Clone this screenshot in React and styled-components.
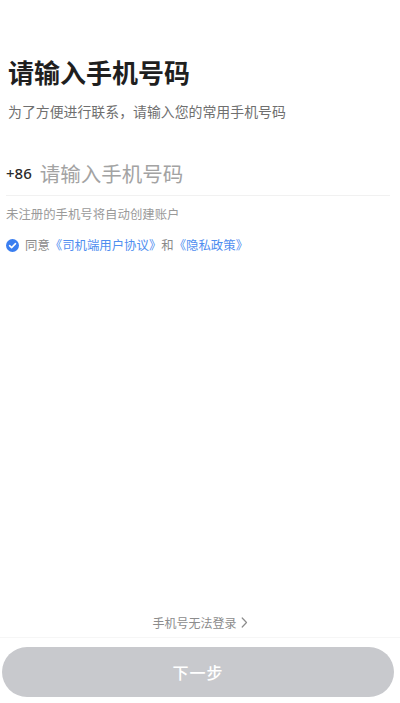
import React from 'react';
import styled, { createGlobalStyle } from 'styled-components';

const GlobalStyle = createGlobalStyle`
  html, body {
    margin: 0;
    padding: 0;
    background: #ffffff;
  }
  body {
    font-family: "Noto Sans CJK SC", "Noto Sans", sans-serif;
  }
`;

const Page = styled.div`
  display: flex;
  flex-direction: column;
  min-height: 100vh;
  box-sizing: border-box;
`;

const Top = styled.div`
  flex: 1;
  padding: 0 10px 0 6px;
`;

const Title = styled.h1`
  margin: 54px 0 0 2px;
  font-size: 26px;
  line-height: 36px;
  font-weight: 700;
  color: #1f1f1f;
`;

const Subtitle = styled.p`
  margin: 11px 0 0 2px;
  font-size: 13.9px;
  line-height: 20px;
  color: #6f6f6f;
`;

const PhoneRow = styled.div`
  display: flex;
  align-items: center;
  gap: 8px;
  height: 45px;
  margin-top: 29px;
  border-bottom: 1px solid #f1f1f1;
`;

const Code = styled.span`
  font-family: "Noto Sans", "Liberation Sans", sans-serif;
  font-size: 15px;
  font-weight: 500;
  color: #2a2a2a;
`;

const PhoneInput = styled.input`
  flex: 1;
  min-width: 0;
  border: none;
  outline: none;
  padding: 0;
  background: transparent;
  font-family: inherit;
  font-size: 20.5px;
  color: #222;

  &::placeholder {
    color: #a3a3a3;
  }
`;

const Hint = styled.p`
  margin: 9px 0 0;
  font-size: 12.4px;
  line-height: 18px;
  color: #9a9a9a;
`;

const AgreeRow = styled.div`
  display: flex;
  align-items: center;
  gap: 6px;
  height: 20px;
  margin-top: 12px;
  font-size: 12.4px;
  color: #8a8a8a;
`;

const Link = styled.span`
  color: #4f8ef0;
`;

const Bottom = styled.div`
  padding: 0 6px 6px 2px;
`;

const HelpLink = styled.div`
  display: flex;
  justify-content: center;
  align-items: center;
  gap: 4px;
  height: 20px;
  padding-bottom: 5px;
  margin-right: -6px;
  margin-left: -2px;
  border-bottom: 1px solid #f6f6f6;
  font-size: 12px;
  color: #8c8c8c;
`;

const NextButton = styled.button`
  display: block;
  width: 100%;
  height: 50px;
  margin-top: 9px;
  border: none;
  border-radius: 25px;
  background: #c8c9cd;
  color: #ffffff;
  font-family: inherit;
  font-size: 16px;
  font-weight: 500;
  letter-spacing: 1px;
`;

const CheckIcon = () => (
  <svg width="13" height="13" viewBox="0 0 16 16">
    <circle cx="8" cy="8" r="8" fill="#3a7ef0" />
    <path d="M4.4 8.2l2.5 2.4 4.8-4.9" fill="none" stroke="#fff" strokeWidth="1.9" strokeLinecap="round" strokeLinejoin="round" />
  </svg>
);

const Chevron = () => (
  <svg width="7" height="11" viewBox="0 0 7 11">
    <path d="M1.2 1l4.3 4.5-4.3 4.5" fill="none" stroke="#8c8c8c" strokeWidth="1.2" strokeLinecap="round" strokeLinejoin="round" />
  </svg>
);

const App = () => {
  return (
    <Page>
      <GlobalStyle />
      <Top>
        <Title>请输入手机号码</Title>
        <Subtitle>为了方便进行联系，请输入您的常用手机号码</Subtitle>
        <PhoneRow>
          <Code>+86</Code>
          <PhoneInput type="tel" placeholder="请输入手机号码" />
        </PhoneRow>
        <Hint>未注册的手机号将自动创建账户</Hint>
        <AgreeRow>
          <CheckIcon />
          <span>
            同意<Link>《司机端用户协议》</Link>和<Link>《隐私政策》</Link>
          </span>
        </AgreeRow>
      </Top>
      <Bottom>
        <HelpLink>
          手机号无法登录
          <Chevron />
        </HelpLink>
        <NextButton>下一步</NextButton>
      </Bottom>
    </Page>
  );
};

export default App;
